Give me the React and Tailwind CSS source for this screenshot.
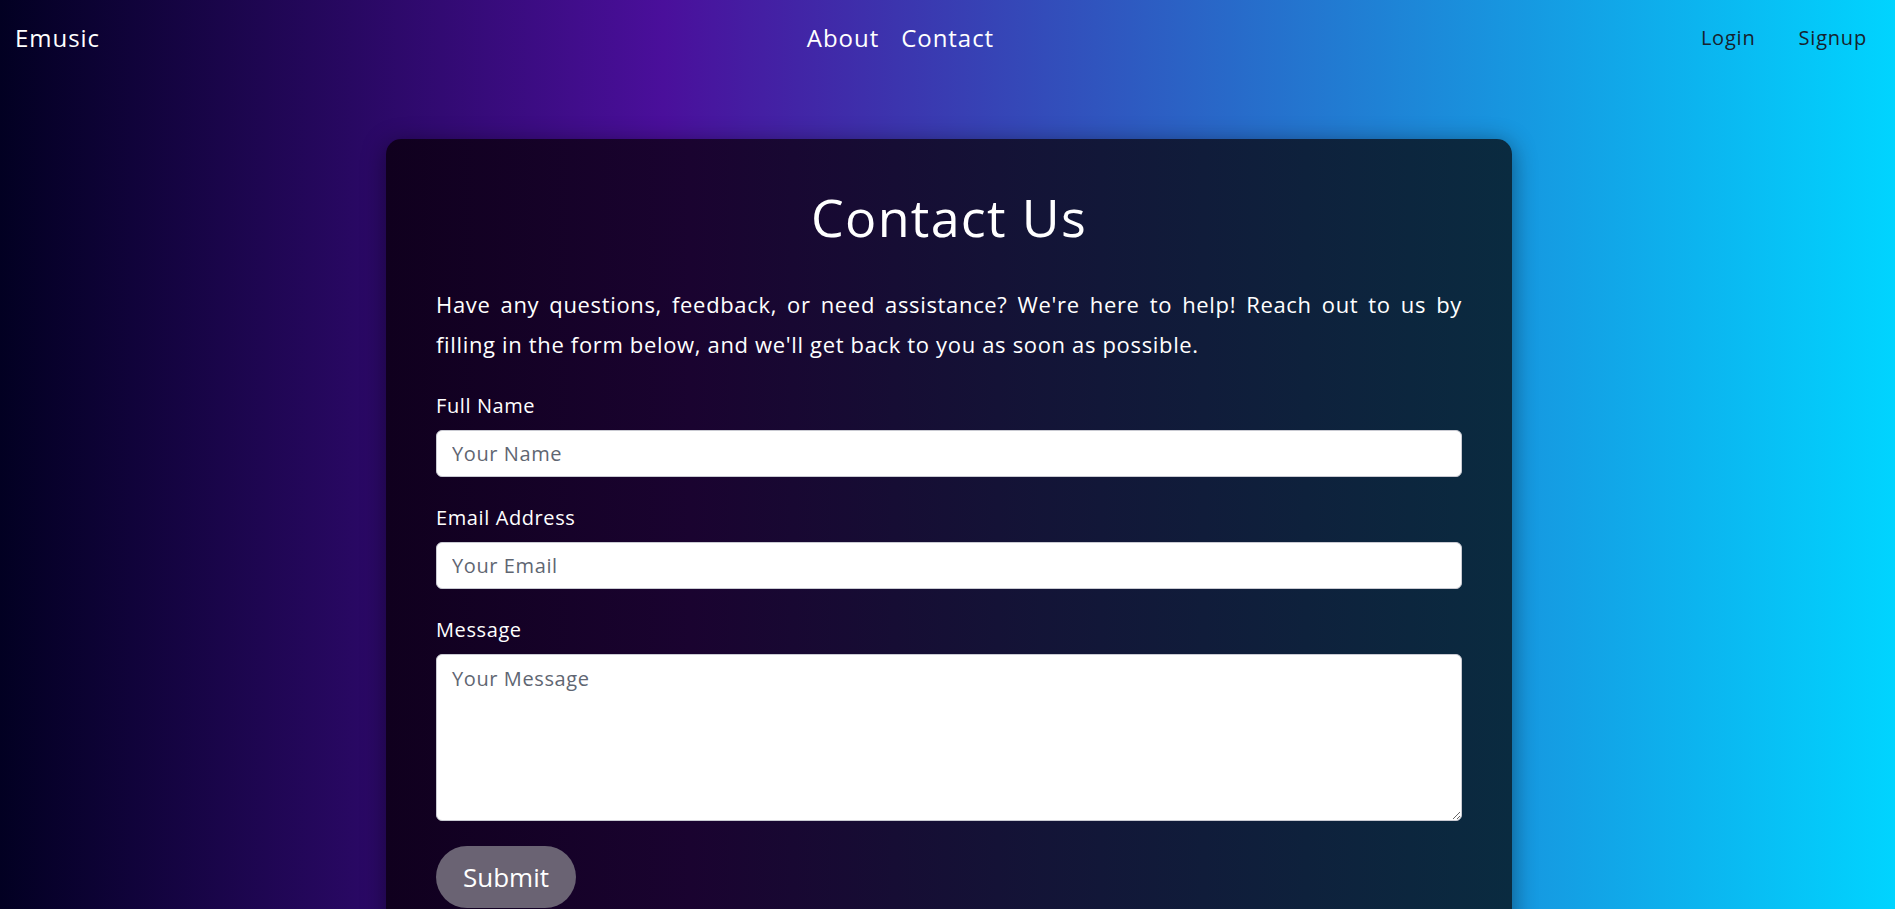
import React from "react";

export default function App() {
  const font = { fontFamily: '"Open Sans", "Noto Sans", sans-serif' };
  const inputCls =
    "w-full rounded-[6px] border border-[#c9cad2] bg-white px-[15px] text-[20px] tracking-[0.03em] text-black outline-none placeholder:text-[#5f6672]";
  const labelCls = "mb-[9px] pt-[2px] text-[20px] leading-[30px] tracking-[0.03em]";
  return (
    <div
      className="h-screen w-full overflow-hidden bg-[linear-gradient(90deg,#020022_0%,#4a0f9b_35%,#00d4ff_100%)] text-white"
      style={font}
    >
      <nav className="flex h-[75px] items-center justify-between pl-[15px] pr-[28px]">
        <div className="text-[24px] leading-none tracking-[0.04em]">Emusic</div>
        <div className="flex items-center gap-[22px] text-[24px] leading-none tracking-[0.04em]">
          <a href="#">About</a>
          <a href="#">Contact</a>
        </div>
        <div className="flex items-center gap-[43px] text-[20px] leading-none tracking-[0.04em] text-[#17222d]">
          <a href="#">Login</a>
          <a href="#">Signup</a>
        </div>
      </nav>

      <div className="mt-[64px] flex justify-center pl-[3px]">
        <div className="w-[1126px] rounded-[15px] bg-[linear-gradient(90deg,#10001e_0%,#1a0330_27%,#0a2b40_100%)] px-[50px] pt-[47px] pb-[60px] shadow-[0_4px_24px_rgba(0,0,0,0.45)]">
          <h1 className="text-center text-[52px] font-normal leading-[1.2] tracking-[0.025em]">Contact Us</h1>
          <p className="mt-[36px] text-[22px] leading-[40px] tracking-[0.03em]">
            <span className="block text-justify [text-align-last:justify]">
              Have any questions, feedback, or need assistance? We're here to help! Reach out to us by
            </span>
            <span className="block">
              filling in the form below, and we'll get back to you as soon as possible.
            </span>
          </p>

          <form className="mt-[25px] flex flex-col gap-[24px]" onSubmit={(e) => e.preventDefault()}>
            <div className="flex flex-col">
              <label className={labelCls}>Full Name</label>
              <input type="text" placeholder="Your Name" className={`h-[47px] ${inputCls}`} />
            </div>
            <div className="flex flex-col">
              <label className={labelCls}>Email Address</label>
              <input type="email" placeholder="Your Email" className={`h-[47px] ${inputCls}`} />
            </div>
            <div className="flex flex-col">
              <label className={labelCls}>Message</label>
              <textarea placeholder="Your Message" className={`h-[167px] pt-[9px] leading-normal ${inputCls}`} />
            </div>
            <div>
              <button
                type="submit"
                className="mt-[1px] rounded-full bg-[#6a6373] px-[27px] py-[12px] text-[26px] leading-[38px] text-white"
              >
                Submit
              </button>
            </div>
          </form>
        </div>
      </div>
    </div>
  );
}
